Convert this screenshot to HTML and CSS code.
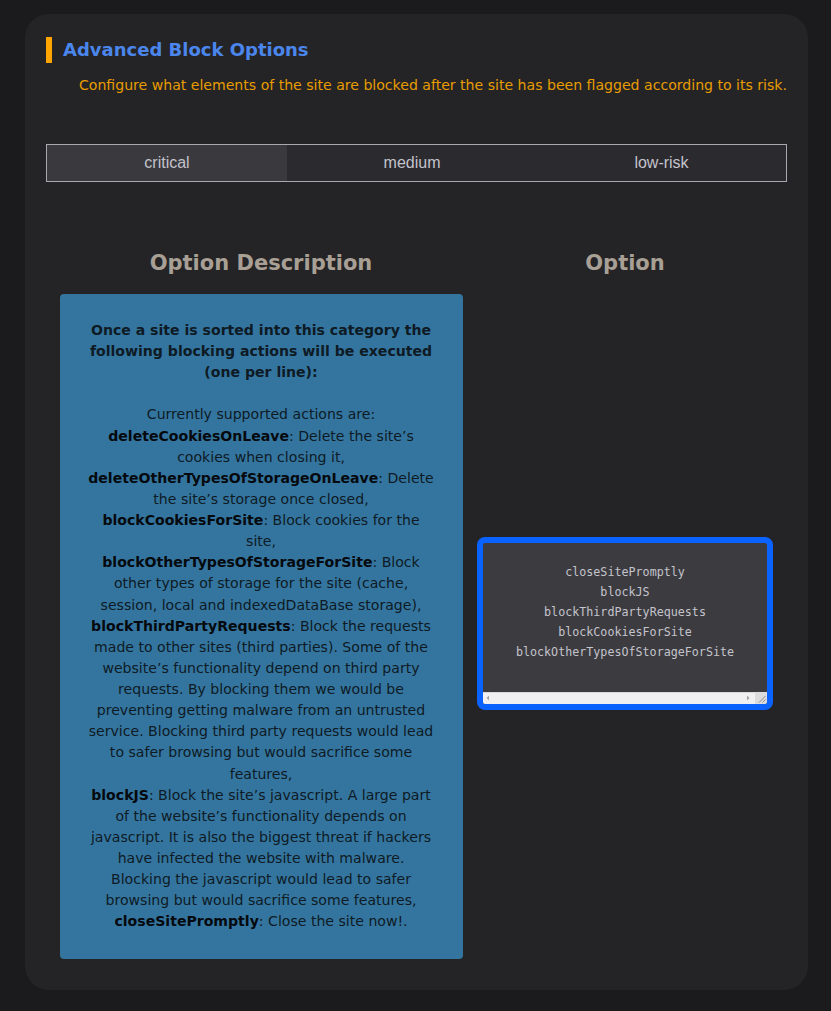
FILE: index.html
```html
<!DOCTYPE html>
<html lang="en">
<head>
<meta charset="utf-8">
<title>Advanced Block Options</title>
<link rel="stylesheet" href="styles.css">
</head>
<body>
<main class="card">
  <h1 class="title">Advanced Block Options</h1>
  <p class="subtitle">Configure what elements of the site are blocked after the site has been flagged according to its risk.</p>

  <nav class="tabs">
    <div class="tab active">critical</div>
    <div class="tab">medium</div>
    <div class="tab">low-risk</div>
  </nav>

  <section class="options">
    <h2 class="col-head">Option Description</h2>
    <h2 class="col-head">Option</h2>

    <div class="desc">
      <p class="desc-lead">Once a site is sorted into this category the following blocking actions will be executed (one per line):</p>
      <p>Currently supported actions are:<br>
      <b>deleteCookiesOnLeave</b>: Delete the site’s cookies when closing it,<br>
      <b>deleteOtherTypesOfStorageOnLeave</b>: Delete the site’s storage once closed,<br>
      <b>blockCookiesForSite</b>: Block cookies for the site,<br>
      <b>blockOtherTypesOfStorageForSite</b>: Block other types of storage for the site (cache, session, local and indexedDataBase storage),<br>
      <b>blockThirdPartyRequests</b>: Block the requests made to other sites (third parties). Some of the website’s functionality depend on third party requests. By blocking them we would be preventing getting malware from an untrusted service. Blocking third party requests would lead to safer browsing but would sacrifice some features,<br>
      <b>blockJS</b>: Block the site’s javascript. A large part of the website’s functionality depends on javascript. It is also the biggest threat if hackers have infected the website with malware. Blocking the javascript would lead to safer browsing but would sacrifice some features,<br>
      <b>closeSitePromptly</b>: Close the site now!.</p>
    </div>

    <div class="editor">
      <div class="editor-text">closeSitePromptly
blockJS
blockThirdPartyRequests
blockCookiesForSite
blockOtherTypesOfStorageForSite</div>
      <div class="hscroll">
        <div class="track">
          <svg class="arrow" width="6" height="8" viewBox="0 0 6 8"><path d="M4 1.5 L1.5 4 L4 6.5 Z" fill="#a3a3a3"/></svg>
          <svg class="arrow" width="6" height="8" viewBox="0 0 6 8"><path d="M2 1.5 L4.5 4 L2 6.5 Z" fill="#a3a3a3"/></svg>
        </div>
        <div class="grip">
          <svg width="12" height="12" viewBox="0 0 12 12"><path d="M10.5 4 L4 10.5 M10.5 7.5 L7.5 10.5" stroke="#8a8a8a" stroke-width="1"/></svg>
        </div>
      </div>
    </div>
  </section>
</main>
</body>
</html>
```

FILE: styles.css
```css
* { box-sizing: border-box; }

html, body {
  margin: 0;
  background: #1b1b1d;
}

body {
  padding: 14px 23px 21px 25px;
  font-family: "DejaVu Sans", sans-serif;
}

.card {
  width: 783px;
  background: #242426;
  border-radius: 24px;
  padding: 23px 21px 31px 21px;
}

.title {
  margin: 0;
  height: 26px;
  line-height: 26px;
  border-left: 6px solid #ffa500;
  padding-left: 11px;
  font-size: 18px;
  font-weight: bold;
  color: #4a86ec;
}

.subtitle {
  margin: 12px 0 0 33px;
  font-size: 14.08px;
  line-height: 21px;
  color: #e89c00;
  white-space: nowrap;
}

.tabs {
  margin-top: 48px;
  height: 38px;
  border: 1px solid #a9a9ad;
  display: grid;
  grid-template-columns: 240px 250px 1fr;
  background: #2b2a2f;
}

.tab {
  line-height: 36px;
  text-align: center;
  font-family: "Liberation Sans", Arial, sans-serif;
  font-size: 16px;
  color: #c3c3cb;
}

.tab.active {
  background: #3a393e;
}

.options {
  margin-top: 66px;
  display: grid;
  grid-template-columns: 430px 298px;
  grid-template-rows: auto auto;
  row-gap: 16px;
}

.col-head {
  margin: 0;
  text-align: center;
  font-size: 21px;
  line-height: 30px;
  font-weight: bold;
  color: #a89f95;
}

.desc {
  width: 403px;
  justify-self: center;
  background: #34759f;
  border-radius: 4px;
  padding: 26px 28px 26px 28px;
  text-align: center;
  font-size: 14.08px;
  line-height: 21.12px;
  color: #0e1a24;
}

.desc p { margin: 0; }

.desc-lead {
  font-weight: bold;
  margin-bottom: 21.12px !important;
}

.desc b { color: #05090d; }

.editor {
  align-self: center;
  justify-self: center;
  width: 296px;
  border: 6px solid #0a63ff;
  border-radius: 8px;
  background: #3c3b40;
  overflow: hidden;
  position: relative;
  top: -3px;
}

.editor-text {
  height: 149px;
  padding-top: 19px;
  white-space: pre;
  text-align: center;
  font-family: "DejaVu Sans Mono", monospace;
  font-size: 11.7px;
  line-height: 20px;
  color: #c4c4cc;
}

.hscroll {
  display: flex;
  height: 12px;
}

.track {
  flex: 1;
  background: #f1f1f1;
  border-top: 1px solid #dadada;
  display: flex;
  justify-content: space-between;
  align-items: center;
  padding: 0 4px 0 2px;
}

.arrow { display: block; }

.grip {
  width: 12px;
  background: #dcdcdc;
}

.grip svg { display: block; }
```
